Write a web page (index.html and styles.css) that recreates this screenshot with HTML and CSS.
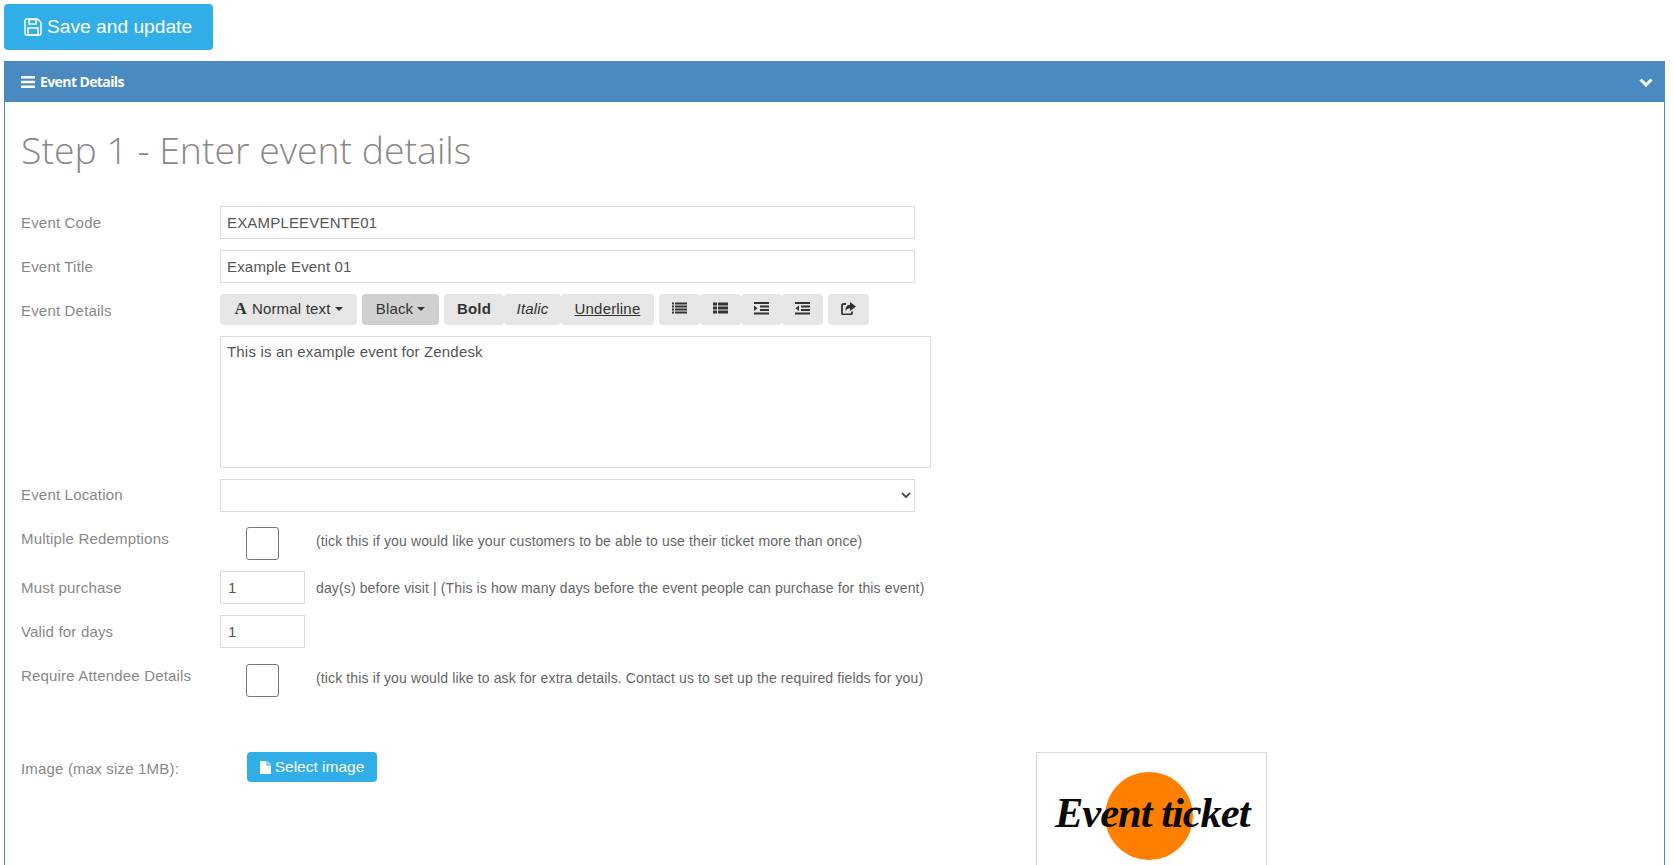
FILE: index.html
```html
<!DOCTYPE html>
<html lang="en">
<head>
    <meta charset="UTF-8">
    <title>Event Details</title>
    <link rel="stylesheet" href="styles.css">
</head>
<body>
    <button class="btn btn-save">
        <svg class="icon-save" viewBox="0 0 18 18"><path d="M2.500 1h11L17 4.500v11a1.500 1.500 0 0 1-1.500 1.500h-13A1.500 1.500 0 0 1 1 15.500v-13A1.500 1.500 0 0 1 2.500 1z" fill="none" stroke="#fff" stroke-width="1.500"/><path d="M5 1.500h7v4.500H5zM4 10h10v7H4z" fill="none" stroke="#fff" stroke-width="1.500"/></svg>
        Save and update
    </button>

    <section class="panel">
        <div class="panel-head">
            <span class="panel-title">
                <svg class="icon-bars" viewBox="0 0 14 12"><path d="M0 0h14v2.400H0zM0 4.800h14v2.400H0zM0 9.600h14V12H0z" fill="#fff"/></svg>
                Event Details
            </span>
            <svg class="icon-chevron" viewBox="0 0 14 10"><path d="M1.500 2.500L7 8l5.500-5.500" fill="none" stroke="#fff" stroke-width="3"/></svg>
        </div>

        <div class="panel-body">
            <h1>Step 1 - Enter event details</h1>

            <div class="form-row">
                <label>Event Code</label>
                <input class="field field-wide" type="text" value="EXAMPLEEVENTE01">
            </div>
            <div class="form-row">
                <label>Event Title</label>
                <input class="field field-wide" type="text" value="Example Event 01">
            </div>
            <div class="form-row">
                <label>Event Details</label>
                <div class="toolbar">
                    <div class="tool-group"><span class="tool tool-text"><b class="glyph-a">A</b> Normal text <i class="caret"></i></span></div>
                    <div class="tool-group"><span class="tool tool-black">Black <i class="caret"></i></span></div>
                    <div class="tool-group">
                        <span class="tool tool-bold">Bold</span>
                        <span class="tool tool-italic">Italic</span>
                        <span class="tool tool-under">Underline</span>
                    </div>
                    <div class="tool-group">
                        <span class="tool tool-icon"><svg viewBox="0 0 15 13"><path d="M0 .5h2v2H0zM3 .5h12v2H3zM0 3.500h2v2H0zM3 3.500h12v2H3zM0 6.500h2v2H0zM3 6.500h12v2H3zM0 9.500h2v2H0zM3 9.500h12v2H3z" fill="#333"/></svg></span>
                        <span class="tool tool-icon"><svg viewBox="0 0 15 13"><path d="M0 .5h4v3H0zM5 .5h10v3H5zM0 4.500h4v3H0zM5 4.500h10v3H5zM0 8.500h4v3H0zM5 8.500h10v3H5z" fill="#333"/></svg></span>
                        <span class="tool tool-icon"><svg viewBox="0 0 15 13"><path d="M0 0h15v2H0zM6 3.500h9v2H6zM6 7h9v2H6zM0 10.500h15v2H0zM0 3.600l3.500 2.650L0 8.900z" fill="#333"/></svg></span>
                        <span class="tool tool-icon"><svg viewBox="0 0 15 13"><path d="M0 0h15v2H0zM6 3.500h9v2H6zM6 7h9v2H6zM0 10.500h15v2H0zM4 3.600L.5 6.250 4 8.900z" fill="#333"/></svg></span>
                    </div>
                    <div class="tool-group">
                        <span class="tool tool-icon"><svg viewBox="0 0 15 13"><path d="M9 0l6 4.500L9 9V6.300C6.800 6.300 5.300 7 4.800 9.500 3.800 5.500 5.700 2.700 9 2.700z" fill="#333"/><path d="M5 2H2.500A1.500 1.500 0 0 0 1 3.500v7.500a1.500 1.500 0 0 0 1.500 1.500h7A1.500 1.500 0 0 0 11 11V9.500" fill="none" stroke="#333" stroke-width="1.800"/></svg></span>
                    </div>
                </div>
            </div>
            <div class="form-row">
                <label></label>
                <div class="editor">This is an example event for Zendesk</div>
            </div>
            <div class="form-row form-row-tight">
                <label>Event Location</label>
                <select class="field field-wide"><option></option></select>
            </div>
            <div class="form-row">
                <label>Multiple Redemptions</label>
                <span class="check"></span>
                <span class="help">(tick this if you would like your customers to be able to use their ticket more than once)</span>
            </div>
            <div class="form-row">
                <label>Must purchase</label>
                <input class="field field-short" type="text" value="1">
                <span class="help help-inline">day(s) before visit | (This is how many days before the event people can purchase for this event)</span>
            </div>
            <div class="form-row">
                <label>Valid for days</label>
                <input class="field field-short" type="text" value="1">
            </div>
            <div class="form-row">
                <label>Require Attendee Details</label>
                <span class="check"></span>
                <span class="help">(tick this if you would like to ask for extra details. Contact us to set up the required fields for you)</span>
            </div>

            <div class="image-row">
                <label>Image (max size 1MB):</label>
                <button class="btn btn-select">
                    <svg class="icon-file" viewBox="0 0 11 13"><path d="M0 0h6.500v4.500H11V13H0z" fill="#fff"/><path d="M7.500 0L11 3.500H7.500z" fill="#fff" opacity=".75"/></svg>
                    Select image
                </button>
                <div class="image-box">
                    <span class="logo-circle"></span>
                    <span class="logo-text">Event ticket</span>
                </div>
            </div>
        </div>
    </section>
</body>
</html>
```

FILE: styles.css
```css
* {
    box-sizing: border-box;
}

html, body {
    height: 100%;
    overflow: hidden;
}

body {
    margin: 0;
    padding: 4px 9px 0 4px;
    font-family: "Liberation Sans", Arial, sans-serif;
    font-size: 15px;
    letter-spacing: 0.18px;
    color: #555;
    background: #fff;
}

.btn {
    display: flex;
    align-items: center;
    border: none;
    color: #fff;
    background: #31aee8;
    font-family: inherit;
}

.btn-save {
    width: 209px;
    height: 46px;
    padding: 0 0 0 20px;
    border-radius: 4px;
    font-size: 19.200px;
}

.icon-save {
    width: 18px;
    height: 18px;
    margin-right: 5px;
}

/* Panel */
.panel {
    margin-top: 11px;
    border: 1px solid #4a8ac1;
    border-top: none;
    height: 900px;
}

.panel-head {
    display: flex;
    align-items: center;
    justify-content: space-between;
    height: 41px;
    margin: 0 -1px;
    padding: 0 12px 0 17px;
    background: #4a8ac1;
}

.panel-title {
    display: flex;
    align-items: center;
    color: #fff;
    font-family: "Open Sans", sans-serif;
    font-size: 14px;
    font-weight: 700;
    letter-spacing: -0.6px;
}

.icon-bars {
    width: 14px;
    height: 12px;
    margin-right: 5px;
}

.icon-chevron {
    width: 14px;
    height: 10px;
}

.panel-body {
    padding: 0 16px;
}

h1 {
    margin: 0;
    padding-top: 23px;
    height: 104px;
    font-family: "Open Sans", sans-serif;
    font-size: 37.400px;
    font-weight: 300;
    line-height: 50px;
    letter-spacing: normal;
    color: #888;
}

/* Form rows */
.form-row {
    display: flex;
    align-items: flex-start;
    margin-bottom: 11px;
}

.form-row-tight {
    margin-bottom: 10px;
}

.form-row-tight label {
    padding-top: 6px;
}

label {
    flex: none;
    width: 199px;
    padding-top: 7px;
    line-height: 20px;
    color: #888;
}

.field {
    height: 33px;
    padding: 0 6px;
    border: 1px solid #ddd;
    background: #fff;
    font-family: inherit;
    font-size: 15px;
    letter-spacing: inherit;
    color: #555;
}

.field-wide {
    width: 695px;
}

.field-short {
    width: 85px;
    padding-left: 7px;
}

.editor {
    width: 711px;
    height: 132px;
    padding: 6px 6px;
    border: 1px solid #ddd;
}

.check {
    flex: none;
    width: 33px;
    height: 33px;
    margin: 5px 37px 0 26px;
    border: 1px solid #777;
    border-radius: 3px;
}

.help {
    padding-top: 10px;
    line-height: 18px;
    font-size: 14px;
    letter-spacing: 0.13px;
    color: #666;
    white-space: nowrap;
}

.help-inline {
    margin-left: 11px;
    padding-top: 8px;
}

/* Toolbar */
.toolbar {
    display: flex;
    gap: 5px;
    height: 31px;
}

.tool-group {
    display: flex;
}

.tool {
    display: flex;
    align-items: center;
    justify-content: center;
    height: 31px;
    padding-bottom: 2px;
    background: #e6e6e6;
    border-radius: 4px;
    color: #333;
}

.tool-text {
    width: 137px;
}

.glyph-a {
    margin-right: 5px;
    font-family: "Liberation Serif", serif;
    font-size: 17px;
}

.tool-black {
    width: 77px;
    background: #d0d0d0;
}

.caret {
    display: inline-block;
    margin-left: 4px;
    border-top: 4px solid #333;
    border-left: 4px solid transparent;
    border-right: 4px solid transparent;
}

.tool-bold {
    width: 60px;
    font-weight: 700;
}

.tool-italic {
    width: 57px;
    font-style: italic;
}

.tool-under {
    width: 93px;
    text-decoration: underline;
}

.tool-icon {
    width: 41px;
    padding-bottom: 3px;
}

.tool-icon svg {
    width: 15px;
    height: 13px;
}

/* Image upload */
.image-row {
    display: flex;
    align-items: flex-start;
    margin-top: 55px;
}

.btn-select {
    flex: none;
    justify-content: center;
    width: 130px;
    height: 30px;
    margin-left: 27px;
    padding: 0;
    border-radius: 4px;
    font-size: 15.500px;
}

.icon-file {
    width: 11px;
    height: 13px;
    margin-right: 4px;
}

.image-box {
    position: relative;
    flex: none;
    width: 231px;
    height: 200px;
    margin-left: 659px;
    border: 1px solid #d8d8d8;
}

.logo-circle {
    position: absolute;
    left: 68px;
    top: 19px;
    width: 88px;
    height: 88px;
    border-radius: 50%;
    background: #ff8000;
}

.logo-text {
    position: absolute;
    left: 18px;
    top: 30px;
    font-family: "Liberation Serif", serif;
    font-size: 42.500px;
    font-weight: 700;
    font-style: italic;
    line-height: 60px;
    letter-spacing: -1px;
    color: #0a0a0a;
    white-space: nowrap;
}
```
